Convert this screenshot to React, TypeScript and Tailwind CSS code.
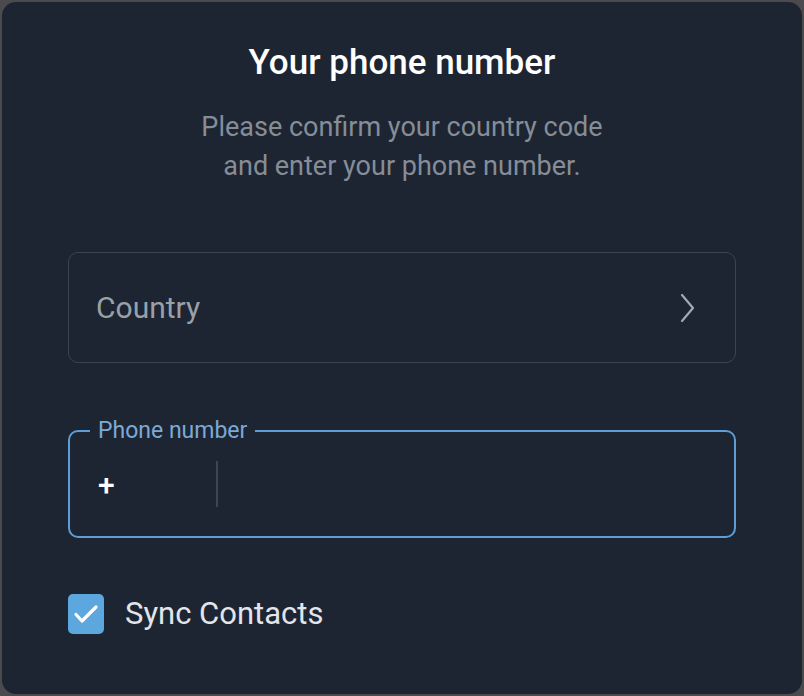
export default function App() {
  return (
    <div className="h-[696px] w-[804px] bg-[#4b4b4d] p-[2px]" style={{ fontFamily: 'Roboto, "Noto Sans", sans-serif' }}>
      <div className="flex h-full w-full flex-col rounded-[14px] bg-[#1d2532] px-[66px]">
        <h1 className="mt-[40px] text-center text-[35px] font-medium leading-[42px] text-white">Your phone number</h1>
        <p className="mt-[24px] text-center text-[27px] leading-[39px] text-[#868d97]">
          Please confirm your country code
          <br />
          and enter your phone number.
        </p>

        <div className="mt-[66px] flex h-[111px] items-center justify-between rounded-[10px] border-[1.5px] border-[#3b4451] pl-[27px] pr-[38px]">
          <span className="text-[30px] text-[#9aa0a8]">Country</span>
          <svg width="18" height="32" viewBox="0 0 18 32" fill="none">
            <path d="M3 3l11 13L3 29" stroke="#a4aab2" strokeWidth="2.2" strokeLinecap="round" strokeLinejoin="round" />
          </svg>
        </div>

        <div className="relative mt-[67px] flex h-[108px] items-center rounded-[10px] border-[2.5px] border-[#5d9dd8]">
          <span className="absolute -top-[14px] left-[20px] bg-[#1d2532] px-[8px] text-[23px] leading-[26px] text-[#7ea9d6]">
            Phone number
          </span>
          <span className="ml-[28px] w-[118px] text-[30px] font-medium text-white">+</span>
          <div className="h-[46px] w-[1.5px] bg-[#3d4552]" />
        </div>

        <label className="mt-[53px] flex items-center gap-[21px]">
          <span className="flex h-[40px] w-[36px] items-center justify-center rounded-[5px] bg-[#5da7df]">
            <svg width="28" height="26" viewBox="0 0 28 26" fill="none">
              <path d="M4 13.5l6 6.5L24 6" stroke="white" strokeWidth="3.2" strokeLinecap="round" strokeLinejoin="round" />
            </svg>
          </span>
          <span className="text-[31px] text-[#e2e6ec]">Sync Contacts</span>
        </label>
      </div>
    </div>
  );
}
